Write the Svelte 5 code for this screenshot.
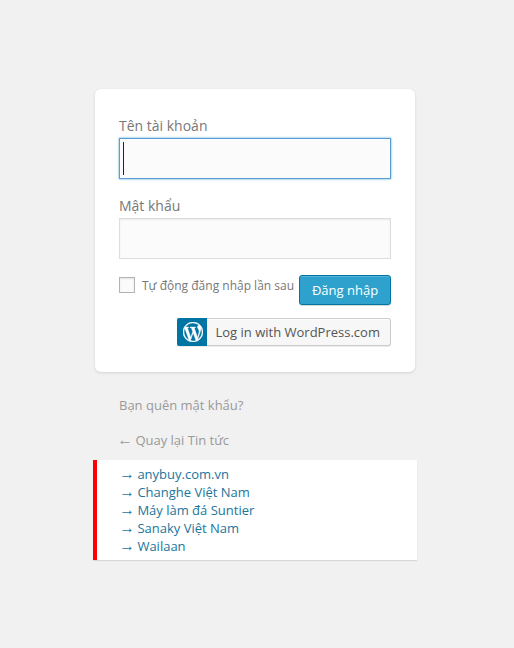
<script>
  let username = $state('');
  let password = $state('');
  let remember = $state(false);
  const sites = ['anybuy.com.vn', 'Changhe Việt Nam', 'Máy làm đá Suntier', 'Sanaky Việt Nam', 'Wailaan'];
</script>

<main class="login">
  <form class="card" onsubmit={(e) => e.preventDefault()}>
    <label class="field">
      <span class="label">Tên tài khoản</span>
      <span class="control">
        <input class="text active" type="text" bind:value={username} />
        <span class="caret"></span>
      </span>
    </label>
    <label class="field">
      <span class="label">Mật khẩu</span>
      <span class="control"><input class="text" type="password" bind:value={password} /></span>
    </label>
    <div class="actions">
      <label class="remember">
        <input type="checkbox" bind:checked={remember} />
        <span>Tự động đăng nhập lần sau</span>
      </label>
      <button class="submit" type="submit">Đăng nhập</button>
    </div>
    <button class="wpcom" type="button">
      <span class="logo">
        <svg viewBox="0 0 24 24" width="20" height="20" aria-hidden="true">
          <path fill="#fff" stroke="#fff" stroke-width="0.5" d="M21.469 6.825c.84 1.537 1.318 3.3 1.318 5.175 0 3.979-2.156 7.456-5.363 9.325l3.295-9.527c.615-1.54.82-2.771.82-3.864 0-.405-.026-.78-.07-1.11m-7.981.105c.647-.03 1.232-.105 1.232-.105.582-.075.514-.93-.067-.899 0 0-1.755.135-2.88.135-1.064 0-2.85-.15-2.85-.15-.585-.03-.661.855-.075.885 0 0 .54.061 1.125.09l1.68 4.605-2.37 7.08L5.354 6.9c.649-.03 1.234-.1 1.234-.1.585-.075.516-.93-.065-.896 0 0-1.746.138-2.874.138-.2 0-.438-.008-.69-.015C4.911 3.15 8.235 1.215 12 1.215c2.809 0 5.365 1.072 7.286 2.833-.046-.003-.091-.009-.141-.009-1.06 0-1.812.923-1.812 1.914 0 .89.513 1.643 1.06 2.531.411.72.89 1.643.89 2.977 0 .915-.354 1.994-.821 3.479l-1.075 3.585-3.9-11.61.001.014zM12 22.784c-1.059 0-2.081-.153-3.048-.437l3.237-9.406 3.315 9.087c.024.053.05.101.078.149-1.12.393-2.325.609-3.582.609M1.211 12c0-1.564.336-3.05.935-4.39L7.29 21.709C3.694 19.96 1.212 16.271 1.211 12M12 0C5.385 0 0 5.385 0 12s5.385 12 12 12 12-5.385 12-12S18.615 0 12 0" />
        </svg>
      </span>
      <span class="wptext">Log in with WordPress.com</span>
    </button>
  </form>

  <nav class="links">
    <a href="#forgot">Bạn quên mật khẩu?</a>
    <a href="#back"><span class="arrow">←</span> Quay lại Tin tức</a>
  </nav>

  <div class="notice">
    {#each sites as site}
      <a href="#site"><span class="arrow">→</span> {site}</a>
    {/each}
  </div>
</main>

<style>
  :global(body) {
    background: #f1f1f1;
  }
  .login {
    box-sizing: border-box;
    height: 648px;
    padding: 89px 97px 0 93px;
    font-family: 'Open Sans', 'Noto Sans', sans-serif;
    font-size: 13px;
    color: #777;
  }
  .card {
    box-sizing: border-box;
    width: 320px;
    height: 283px;
    margin-left: 2px;
    padding: 26px 24px 0;
    display: flex;
    flex-direction: column;
    background: #fff;
    border-radius: 6px;
    box-shadow: 0 1px 3px rgba(0, 0, 0, 0.13);
  }
  .field {
    display: block;
    height: 80px;
  }
  .label {
    display: block;
    height: 23px;
    line-height: 21px;
    font-size: 14px;
  }
  .control {
    display: block;
    position: relative;
    height: 41px;
  }
  .text {
    display: block;
    box-sizing: border-box;
    width: 272px;
    height: 41px;
    margin: 0;
    padding: 3px;
    border: 1px solid #ddd;
    background: #fbfbfb;
    box-shadow: inset 0 1px 2px rgba(0, 0, 0, 0.07);
    font: 24px 'Open Sans', sans-serif;
    outline: none;
  }
  .active {
    border-color: #5b9dd9;
    box-shadow: 0 0 2px rgba(30, 140, 190, 0.8);
  }
  .caret {
    position: absolute;
    left: 4px;
    top: 4px;
    width: 1px;
    height: 33px;
    background: #222;
  }
  .actions {
    display: flex;
    justify-content: space-between;
    height: 43px;
  }
  .remember {
    display: flex;
    align-items: center;
    height: 20px;
    font-size: 12px;
    white-space: nowrap;
  }
  .remember input {
    appearance: none;
    box-sizing: border-box;
    width: 16px;
    height: 16px;
    margin: 0 7px 0 0;
    border: 1px solid #b4b4b4;
    background: #fbfbfb;
    box-shadow: inset 0 1px 2px rgba(0, 0, 0, 0.1);
  }
  button {
    box-sizing: border-box;
    margin: 0;
    padding: 0;
    font: 13px 'Open Sans', 'Noto Sans', sans-serif;
    white-space: nowrap;
  }
  .submit {
    width: 92px;
    height: 30px;
    border: 1px solid #0074a2;
    border-radius: 3px;
    background: #2ea2cc;
    color: #fff;
    box-shadow: inset 0 1px 0 rgba(120, 200, 230, 0.5), 0 1px 0 rgba(0, 0, 0, 0.15);
  }
  .wpcom {
    display: flex;
    align-self: flex-end;
    width: 214px;
    height: 28px;
    border: 1px solid #ccc;
    border-left: 0;
    border-radius: 3px;
    background: #f7f7f7;
    color: #555;
    box-shadow: inset 0 1px 0 #fff, 0 1px 0 rgba(0, 0, 0, 0.08);
  }
  .logo {
    display: flex;
    align-items: center;
    justify-content: center;
    width: 30px;
    height: 28px;
    margin-top: -1px;
    padding-left: 1px;
    box-sizing: border-box;
    border-radius: 2px 0 0 2px;
    background: #0074a2;
  }
  .wptext {
    padding-left: 8.5px;
    line-height: 26px;
  }
  .links {
    display: flex;
    flex-direction: column;
    height: 88px;
    box-sizing: border-box;
    padding: 24px 0 0 26px;
  }
  .links a {
    flex: none;
    height: 35px;
    line-height: 18px;
    color: #999;
    text-decoration: none;
  }
  .links a:last-child {
    height: 18px;
  }
  .arrow {
    display: inline-block;
    width: 13px;
    line-height: 1;
    font-family: 'Liberation Serif', serif;
    font-size: 15.5px;
    line-height: 13px;
    text-indent: -1.8px;
    white-space: nowrap;
  }
  .notice {
    box-sizing: border-box;
    width: 324px;
    height: 100px;
    padding: 5px 0 0 24px;
    display: flex;
    flex-direction: column;
    border-left: 4px solid #f00;
    background: #fff;
    box-shadow: 0 1px 1px rgba(0, 0, 0, 0.1);
  }
  .notice a {
    height: 18px;
    line-height: 18px;
    color: #21759b;
    text-decoration: none;
  }
</style>
